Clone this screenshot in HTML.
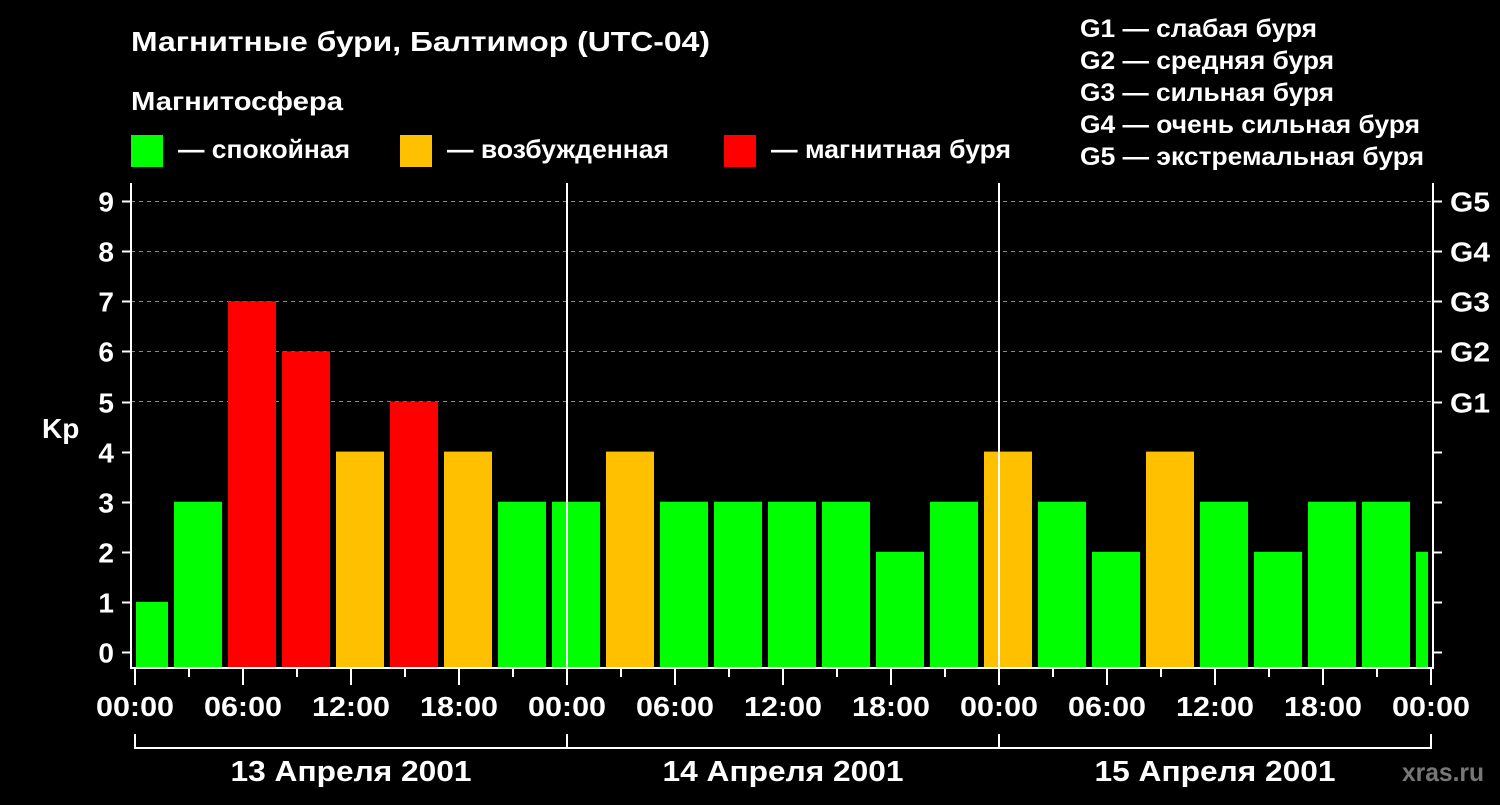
<!DOCTYPE html>
<html><head><meta charset="utf-8"><style>
body{margin:0;background:#000;width:1500px;height:800px;overflow:hidden}
text{font-family:"Liberation Sans",sans-serif;font-weight:bold;fill:#fff}
</style></head><body>
<svg width="1500" height="800" xmlns="http://www.w3.org/2000/svg">
<text x="131" y="51" font-size="28" textLength="579" lengthAdjust="spacingAndGlyphs">Магнитные бури, Балтимор (UTC-04)</text>
<text x="131" y="110" font-size="26" textLength="212" lengthAdjust="spacingAndGlyphs">Магнитосфера</text>
<rect x="131" y="135" width="32" height="32" fill="#00ff00"/>
<text x="178" y="158" font-size="26" textLength="172" lengthAdjust="spacingAndGlyphs">— спокойная</text>
<rect x="400" y="135" width="32" height="32" fill="#ffc000"/>
<text x="447" y="158" font-size="26" textLength="222" lengthAdjust="spacingAndGlyphs">— возбужденная</text>
<rect x="724" y="135" width="32" height="32" fill="#ff0000"/>
<text x="771" y="158" font-size="26" textLength="240" lengthAdjust="spacingAndGlyphs">— магнитная буря</text>
<g font-size="25" lengthAdjust="spacingAndGlyphs">
<text x="1080" y="37" textLength="237" lengthAdjust="spacingAndGlyphs">G1 — слабая буря</text>
<text x="1080" y="69" textLength="254" lengthAdjust="spacingAndGlyphs">G2 — средняя буря</text>
<text x="1080" y="101" textLength="254" lengthAdjust="spacingAndGlyphs">G3 — сильная буря</text>
<text x="1080" y="133" textLength="340" lengthAdjust="spacingAndGlyphs">G4 — очень сильная буря</text>
<text x="1080" y="165" textLength="344" lengthAdjust="spacingAndGlyphs">G5 — экстремальная буря</text>
</g>
<g stroke="#888" stroke-dasharray="4,4" stroke-width="1">
<line x1="131" y1="201.5" x2="1433" y2="201.5"/>
<line x1="131" y1="251.5" x2="1433" y2="251.5"/>
<line x1="131" y1="301.5" x2="1433" y2="301.5"/>
<line x1="131" y1="351.5" x2="1433" y2="351.5"/>
<line x1="131" y1="401.5" x2="1433" y2="401.5"/>
</g>
<g id="bars"></g>
<g stroke="#fff" stroke-width="2" fill="none">
<polyline points="131,183 131,668 1433,668 1433,183"/>
<line x1="567" y1="183" x2="567" y2="668"/>
<line x1="999" y1="183" x2="999" y2="668"/>
<path d="M135,734V748H1431V734M567,734V748M999,734V748"/>
</g>
<g id="ticks" stroke="#fff" stroke-width="2"></g>
<g id="lab" font-size="28"></g>
<text x="42" y="438" font-size="28">Kp</text>
<g font-size="29" text-anchor="middle">
<text x="351" y="781" textLength="241" lengthAdjust="spacingAndGlyphs">13 Апреля 2001</text>
<text x="783" y="781" textLength="241" lengthAdjust="spacingAndGlyphs">14 Апреля 2001</text>
<text x="1215" y="781" textLength="241" lengthAdjust="spacingAndGlyphs">15 Апреля 2001</text>
</g>
<text x="1402" y="781" font-size="26" style="fill:#777" font-weight="normal" textLength="82" lengthAdjust="spacingAndGlyphs">xras.ru</text>
</svg>
<script>
var ns="http://www.w3.org/2000/svg";
function el(p,t,a,tx){var e=document.createElementNS(ns,t);for(var k in a)e.setAttribute(k,a[k]);if(tx)e.textContent=tx;document.getElementById(p).appendChild(e);}
var kp=[1,3,7,6,4,5,4,3,3,4,3,3,3,3,2,3,4,3,2,4,3,2,3,3,2];
function col(v){return v>=5?"#ff0000":v==4?"#ffc000":"#00ff00";}
function y(v){return 652-50.1*v;}
for(var i=0;i<kp.length;i++){var x0,x1;
if(i==0){x0=136;x1=168;}else{x0=174+54*(i-1);x1=x0+48;}
if(x1>1428)x1=1428;
el("bars","rect",{x:x0,y:y(kp[i]),width:x1-x0,height:668-y(kp[i]),fill:col(kp[i])});}
for(var v=0;v<=9;v++){var yy=Math.round(y(v))+0.5;
el("ticks","line",{x1:122,y1:yy,x2:131,y2:yy});
el("ticks","line",{x1:1433,y1:yy,x2:1442,y2:yy});
el("lab","text",{x:114,y:yy+10,"text-anchor":"end"},""+v);
if(v>=5)el("lab","text",{x:1450,y:yy+10,textLength:40,lengthAdjust:"spacingAndGlyphs"},"G"+(v-4));}
for(var h=0;h<=24;h++){var x=135+54*h;var maj=h%2==0;
el("ticks","line",{x1:x,y1:669,x2:x,y2:maj?685:677});
if(maj)el("lab","text",{x:x,y:716,"text-anchor":"middle",textLength:78,lengthAdjust:"spacingAndGlyphs"},["00","06","12","18"][(h/2)%4]+":00");}
</script>
</body></html>
